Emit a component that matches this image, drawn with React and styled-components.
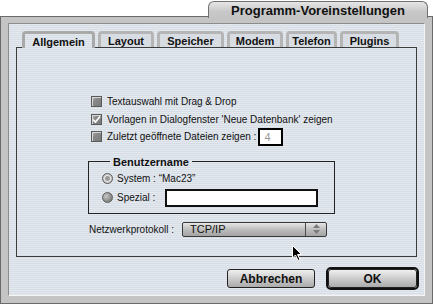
import React from "react";
import styled, { createGlobalStyle } from "styled-components";

const GlobalStyle = createGlobalStyle`
  body {
    margin: 0;
    background: #ffffff;
    font-family: "Liberation Sans", Arial, sans-serif;
  }
`;

const stripes = `repeating-linear-gradient(
  180deg,
  #e4e9f0 0px,
  #e4e9f0 1px,
  #d7dde5 1px,
  #d7dde5 2px
)`;

const Window = styled.div`
  width: 433px;
  height: 304px;
  display: flex;
  flex-direction: column;
`;

const TitleRow = styled.div`
  display: flex;
  justify-content: flex-end;
  padding-right: 5px;
  height: 16px;
`;

const TitleTab = styled.div`
  position: relative;
  z-index: 1;
  width: 220px;
  height: 17px;
  margin-top: 1px;
  box-sizing: border-box;
  border: 1px solid #707070;
  border-bottom: none;
  border-radius: 6px 6px 0 0;
  background: linear-gradient(180deg, #e6e6e6 0%, #c8c8c8 60%, #c4c4c4 100%);
  display: flex;
  align-items: center;
  justify-content: center;
  font-weight: bold;
  font-size: 13px;
  color: #111;
`;

const Frame = styled.div`
  flex: 1;
  box-sizing: border-box;
  border: 1px solid #6a6a6a;
  background: #c4c4c4;
  padding: 6px 7px 7px 7px;
  display: flex;
`;

const Content = styled.div`
  flex: 1;
  box-sizing: border-box;
  border-top: 1px solid #8c8c8c;
  border-left: 1px solid #8c8c8c;
  border-right: 1px solid #f4f4f4;
  border-bottom: 1px solid #f4f4f4;
  background: ${stripes};
  padding: 7px 7px 0 7px;
  display: flex;
  flex-direction: column;
`;

const TabBar = styled.div`
  display: flex;
  gap: 3px;
  padding-left: 6px;
  height: 16px;
  position: relative;
  z-index: 1;
`;

const Tab = styled.div`
  box-sizing: border-box;
  width: ${(p) => p.$w}px;
  height: ${(p) => (p.$active ? 17 : 16)}px;
  border: 3px solid ${(p) => (p.$active ? "#a9a9a9" : "#b5b5b5")};
  border-bottom: none;
  border-radius: 4px 4px 0 0;
  background: ${(p) => (p.$active ? stripes : "#d8dde4")};
  display: flex;
  align-items: center;
  justify-content: center;
  font-weight: bold;
  font-size: 11px;
  color: #111;
  padding-top: 1px;
`;

const Panel = styled.div`
  box-sizing: border-box;
  width: 401px;
  height: 210px;
  border: 1px solid #3c3c3c;
  padding: 45px 0 0 71px;
  display: flex;
  flex-direction: column;
`;

const CheckRow = styled.div`
  display: flex;
  align-items: center;
  height: 17.5px;
  margin-left: 3px;
  font-size: 10px;
  color: #111;
  gap: 5px;
`;

const CheckBox = styled.span`
  width: 11px;
  height: 11px;
  box-sizing: border-box;
  border: 1px solid #5a5a5a;
  background: linear-gradient(135deg, #c8c8c8 0%, #8a8a8a 35%, #7a7a7a 100%);
  box-shadow: inset 1px 1px 0 #d6d6d6;
  display: flex;
  align-items: center;
  justify-content: center;
  flex-shrink: 0;
`;

const NumberBox = styled.span`
  width: 25px;
  height: 18px;
  box-sizing: border-box;
  border: 2px solid #000;
  background: #fff;
  color: #9a9a9a;
  font-size: 11px;
  display: flex;
  align-items: center;
  padding-left: 4px;
  margin-left: -3px;
  flex-shrink: 0;
`;

const Group = styled.fieldset`
  width: 247px;
  box-sizing: border-box;
  margin: 10px 0 0 0;
  padding: 2px 0 5px 13px;
  border: 1px solid #222;
  min-width: 0;
`;

const Legend = styled.legend`
  font-weight: bold;
  font-size: 11px;
  line-height: 12px;
  padding: 0 3px;
  margin-left: 8px;
  color: #111;
`;

const RadioRow = styled.div`
  display: flex;
  align-items: center;
  height: ${(p) => p.$h}px;
  gap: 4px;
  font-size: 10px;
  color: #111;
`;

const Radio = styled.span`
  width: 11px;
  height: 11px;
  border-radius: 50%;
  box-sizing: border-box;
  border: 1px solid #5c5c5c;
  background: ${(p) =>
    p.$on
      ? "radial-gradient(circle at 50% 50%, #9a9a9a 0 2px, #e6e6e6 3px, #8a8a8a 100%)"
      : "radial-gradient(circle at 35% 35%, #c8c8c8 0, #8c8c8c 60%, #6e6e6e 100%)"};
  flex-shrink: 0;
`;

const TextField = styled.span`
  width: 153px;
  height: 18px;
  box-sizing: border-box;
  border: 2px solid #111;
  background: #fff;
  margin-left: 6px;
`;

const ProtoRow = styled.div`
  display: flex;
  align-items: center;
  margin-top: 8px;
  margin-left: 1px;
  gap: 8px;
  font-size: 10px;
  color: #111;
`;

const Popup = styled.div`
  width: 145px;
  height: 15px;
  box-sizing: border-box;
  border: 1px solid #3a3a3a;
  border-radius: 2px;
  background: linear-gradient(180deg, #e6e6e6 0%, #bdbdbd 50%, #a4a4a4 100%);
  display: flex;
  font-size: 11px;
  color: #111;
`;

const PopupLabel = styled.span`
  flex: 1;
  display: flex;
  align-items: center;
  padding-left: 7px;
`;

const PopupArrows = styled.span`
  width: 20px;
  border-left: 1px solid #4a4a4a;
  display: flex;
  align-items: center;
  justify-content: center;
`;

const ButtonRow = styled.div`
  display: flex;
  justify-content: flex-end;
  align-items: center;
  gap: 11px;
  margin-top: 10px;
  margin-right: -2px;
`;

const Button = styled.div`
  width: ${(p) => p.$w}px;
  height: 19px;
  box-sizing: border-box;
  border: 1px solid #222;
  border-radius: 3px;
  background: linear-gradient(180deg, #f0f0f0 0%, #cfcfcf 45%, #ababab 100%);
  display: flex;
  align-items: center;
  justify-content: center;
  font-weight: bold;
  font-size: 12px;
  color: #111;
`;

const DefaultRing = styled.div`
  border: 2px solid #111;
  border-radius: 5px;
  display: flex;
`;

const Cursor = styled.svg`
  position: absolute;
  left: 292px;
  top: 245px;
  pointer-events: none;
`;

const tabs = [
  { label: "Allgemein", w: 73 },
  { label: "Layout", w: 56 },
  { label: "Speicher", w: 67 },
  { label: "Modem", w: 56 },
  { label: "Telefon", w: 51 },
  { label: "Plugins", w: 59 },
];

const Check = () => (
  <svg width="9" height="9" viewBox="0 0 9 9">
    <path d="M1 4.5 L3.5 7 L8 1.5" stroke="#fff" strokeWidth="1.6" fill="none" />
  </svg>
);

export default function App() {
  return (
    <>
      <GlobalStyle />
      <Window>
        <TitleRow>
          <TitleTab>Programm-Voreinstellungen</TitleTab>
        </TitleRow>
        <Frame>
          <Content>
            <TabBar>
              {tabs.map((t, i) => (
                <Tab key={t.label} $w={t.w} $active={i === 0}>
                  {t.label}
                </Tab>
              ))}
            </TabBar>
            <Panel>
              <CheckRow>
                <CheckBox />
                Textauswahl mit Drag &amp; Drop
              </CheckRow>
              <CheckRow>
                <CheckBox>
                  <Check />
                </CheckBox>
                Vorlagen in Dialogfenster 'Neue Datenbank' zeigen
              </CheckRow>
              <CheckRow>
                <CheckBox />
                Zuletzt geöffnete Dateien zeigen :
                <NumberBox>4</NumberBox>
              </CheckRow>
              <Group>
                <Legend>Benutzername</Legend>
                <RadioRow $h={18}>
                  <Radio $on />
                  System : “Mac23”
                </RadioRow>
                <RadioRow $h={20}>
                  <Radio />
                  Spezial :
                  <TextField />
                </RadioRow>
              </Group>
              <ProtoRow>
                Netzwerkprotokoll :
                <Popup>
                  <PopupLabel>TCP/IP</PopupLabel>
                  <PopupArrows>
                    <svg width="7" height="10" viewBox="0 0 7 10">
                      <path d="M3.5 0 L7 4 L0 4 Z M0 6 L7 6 L3.5 10 Z" fill="#7a7a7a" />
                    </svg>
                  </PopupArrows>
                </Popup>
              </ProtoRow>
            </Panel>
            <ButtonRow>
              <Button $w={88}>Abbrechen</Button>
              <DefaultRing>
                <Button $w={89}>OK</Button>
              </DefaultRing>
            </ButtonRow>
          </Content>
        </Frame>
        <Cursor width="11" height="17" viewBox="0 0 11 17">
          <path d="M0.5 0.5 L0.5 13 L3.5 10 L6 15.5 L8 14.5 L5.5 9.5 L9.5 9.5 Z" fill="#000" stroke="#fff" strokeWidth="1" />
        </Cursor>
      </Window>
    </>
  );
}
